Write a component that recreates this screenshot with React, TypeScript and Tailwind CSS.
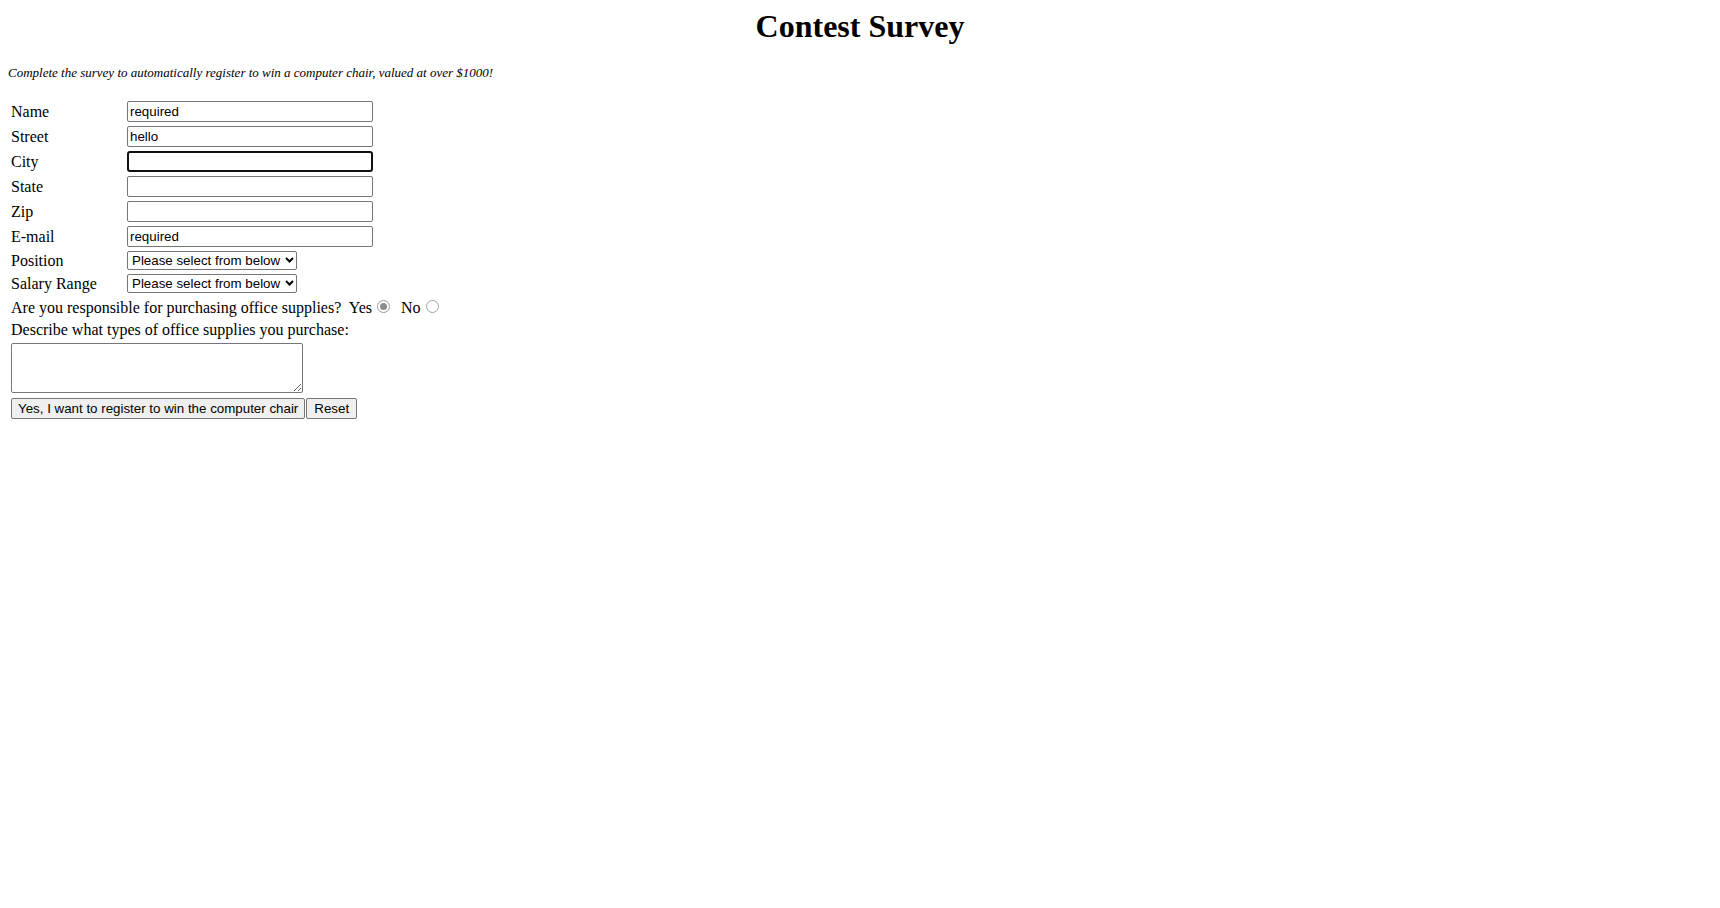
import { useState } from 'react';

interface TextRowProps {
    label: string;
    value?: string;
    focused?: boolean;
}

function TextRow({ label, value = '', focused = false }: TextRowProps) {
    return (
        <div className="flex h-[25px] items-center">
            <label className="w-[116px] shrink-0 leading-[18px]">{label}</label>
            {focused ? (
                <input
                    type="text"
                    defaultValue={value}
                    className="h-[21px] w-[246px] rounded-[3px] border-2 border-[#101010] bg-white px-[1px] font-['Liberation_Sans',Arial,sans-serif] text-[13.333px] text-black outline-none"
                />
            ) : (
                <input
                    type="text"
                    defaultValue={value}
                    className="h-[21px] w-[246px] rounded-[2px] border border-[#767676] bg-white px-[2px] font-['Liberation_Sans',Arial,sans-serif] text-[13.333px] text-black outline-none"
                />
            )}
        </div>
    );
}

function SelectRow({ label }: { label: string }) {
    return (
        <div className="flex h-[23px] items-center">
            <label className="w-[116px] shrink-0 leading-[18px]">{label}</label>
            <div className="relative h-[19px] w-[170px]">
                <select className="block h-[19px] w-[170px] appearance-none rounded-[2px] border border-[#767676] bg-white pl-[4px] pr-[10px] font-['Liberation_Sans',Arial,sans-serif] text-[13.333px] leading-[15px] text-black outline-none">
                    <option>Please select from below</option>
                </select>
                {/* chevron */}
                <svg
                    className="pointer-events-none absolute right-[3px] top-[6px]"
                    width="9"
                    height="6"
                    viewBox="0 0 9 6"
                >
                    <path d="M1 1l3.5 3.5L8 1" stroke="#000" strokeWidth="2" fill="none" />
                </svg>
            </div>
        </div>
    );
}

function Radio({ checked, onClick, className }: { checked: boolean; onClick: () => void; className: string }) {
    return (
        <span
            onClick={onClick}
            className={`relative inline-block h-[13px] w-[13px] cursor-default rounded-full border bg-white ${checked ? 'border-[#9a9a9a]' : 'border-[#a3a3a3]'} ${className}`}
        >
            {checked && <span className="absolute inset-[2px] rounded-full bg-[#8c8c8c]" />}
        </span>
    );
}

export default function App() {
    const [buyer, setBuyer] = useState<'yes' | 'no'>('yes');

    return (
        <div className="min-h-screen bg-white font-['Liberation_Serif','Times_New_Roman',serif] text-[16px] text-black">
            <h1 className="pt-[8px] text-center text-[32px] font-bold leading-[37px]">Contest Survey</h1>

            <p className="mt-[20px] pl-[8px] text-[13px] italic leading-[16px]">
                Complete the survey to automatically register to win a computer chair, valued at over $1000!
            </p>

            <form className="mt-[18px] pl-[11px]" onSubmit={(e) => e.preventDefault()}>
                <TextRow label="Name" value="required" />
                <TextRow label="Street" value="hello" />
                <TextRow label="City" focused />
                <TextRow label="State" />
                <TextRow label="Zip" />
                <TextRow label="E-mail" value="required" />
                <SelectRow label="Position" />
                <SelectRow label="Salary Range" />

                <div className="h-[22px] pt-[4px] leading-[18px]">
                    Are you responsible for purchasing office supplies?{'\u00a0 '}Yes{' '}
                    <Radio className="ml-[1px] mr-[3px]" checked={buyer === 'yes'} onClick={() => setBuyer('yes')} />
                    {'\u00a0 '}No
                    <Radio className="ml-[5px]" checked={buyer === 'no'} onClick={() => setBuyer('no')} />
                </div>

                <div className="h-[22px] pt-[4px] leading-[18px]">Describe what types of office supplies you purchase:</div>

                <textarea className="mt-[4px] block h-[50px] w-[292px] rounded-[2px] border border-[#767676] bg-white p-[2px] font-['Liberation_Mono',monospace] text-[13.333px] outline-none" />

                <div className="mt-[5px] flex gap-[1px]">
                    <button
                        type="submit"
                        className="h-[21px] rounded-[2px] border border-[#767676] bg-[#efefef] px-[6px] font-['Liberation_Sans',Arial,sans-serif] text-[13.333px] leading-[15px] text-black"
                    >
                        Yes, I want to register to win the computer chair
                    </button>
                    <button
                        type="reset"
                        className="h-[21px] rounded-[2px] border border-[#767676] bg-[#efefef] px-[7px] font-['Liberation_Sans',Arial,sans-serif] text-[13.333px] leading-[15px] text-black"
                    >
                        Reset
                    </button>
                </div>
            </form>
        </div>
    );
}
